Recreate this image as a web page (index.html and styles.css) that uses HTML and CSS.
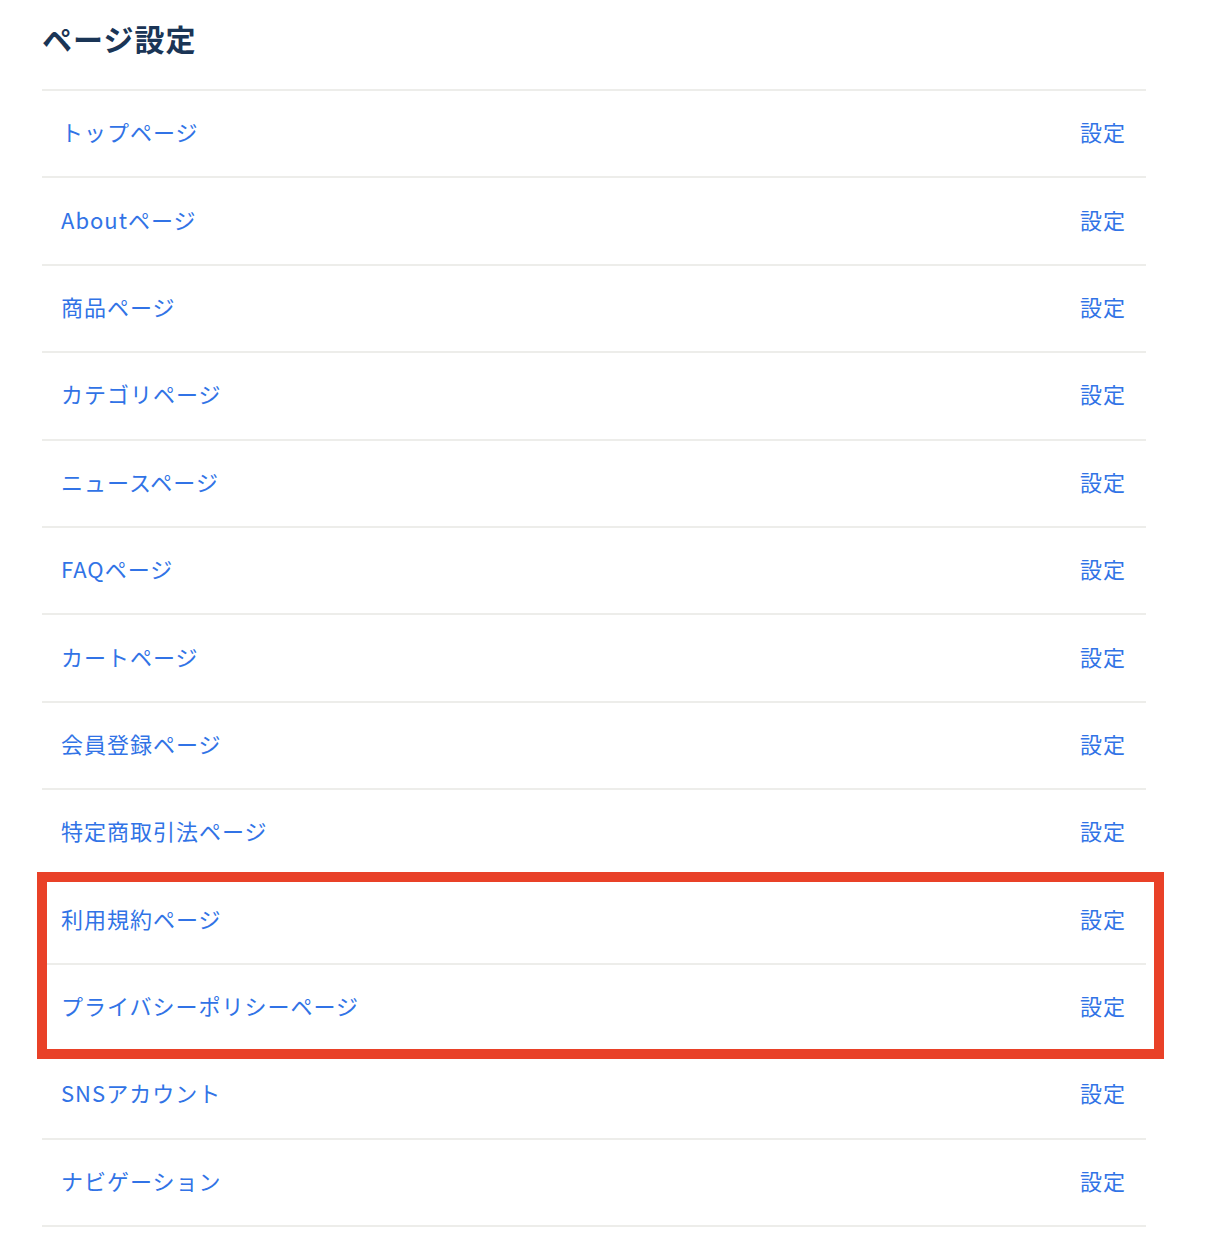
FILE: index.html
```html
<!DOCTYPE html>
<html lang="ja">
<head>
<meta charset="UTF-8">
<meta name="viewport" content="width=device-width, initial-scale=1.0">
<title>ページ設定</title>
<link rel="stylesheet" href="styles.css">
</head>
<body>
<div class="page-settings">
    <h1 class="page-title">ページ設定</h1>
    <ul class="settings-list">
        <li class="settings-row"><a class="row-label" href="#">トップページ</a><a class="row-action" href="#">設定</a></li>
        <li class="settings-row"><a class="row-label" href="#">Aboutページ</a><a class="row-action" href="#">設定</a></li>
        <li class="settings-row"><a class="row-label" href="#">商品ページ</a><a class="row-action" href="#">設定</a></li>
        <li class="settings-row"><a class="row-label" href="#">カテゴリページ</a><a class="row-action" href="#">設定</a></li>
        <li class="settings-row"><a class="row-label" href="#">ニュースページ</a><a class="row-action" href="#">設定</a></li>
        <li class="settings-row"><a class="row-label" href="#">FAQページ</a><a class="row-action" href="#">設定</a></li>
        <li class="settings-row"><a class="row-label" href="#">カートページ</a><a class="row-action" href="#">設定</a></li>
        <li class="settings-row"><a class="row-label" href="#">会員登録ページ</a><a class="row-action" href="#">設定</a></li>
        <li class="settings-row"><a class="row-label" href="#">特定商取引法ページ</a><a class="row-action" href="#">設定</a></li>
        <li class="highlight-group">
            <ul class="settings-list">
                <li class="settings-row"><a class="row-label" href="#">利用規約ページ</a><a class="row-action" href="#">設定</a></li>
                <li class="settings-row"><a class="row-label" href="#">プライバシーポリシーページ</a><a class="row-action" href="#">設定</a></li>
            </ul>
        </li>
        <li class="settings-row"><a class="row-label" href="#">SNSアカウント</a><a class="row-action" href="#">設定</a></li>
        <li class="settings-row last"><a class="row-label" href="#">ナビゲーション</a><a class="row-action" href="#">設定</a></li>
    </ul>
</div>
</body>
</html>
```

FILE: styles.css
```css
* {
    margin: 0;
    padding: 0;
    box-sizing: border-box;
    font-family: "Noto Sans CJK JP", "Noto Sans", sans-serif;
}

body {
    background-color: #fff;
}

.page-settings {
    width: 1104px;
    margin-left: 42px;
    padding-top: 17px;
}

.page-title {
    font-size: 30px;
    font-weight: bold;
    color: #1a3556;
    line-height: 42px;
    height: 72px;
    letter-spacing: 1px;
}

.settings-list {
    list-style: none;
}

.settings-row {
    display: flex;
    align-items: center;
    justify-content: space-between;
    height: 87.4px;
    border-top: 2px solid #ededea;
    padding: 0 20px 5px 19px;
}

.settings-row.last {
    border-bottom: 2px solid #ededea;
    height: 89.4px;
}

.row-label,
.row-action {
    font-size: 22px;
    color: #3173e6;
    text-decoration: none;
    line-height: 30px;
    letter-spacing: 1px;
}

.highlight-group {
    position: relative;
}

/* annotation frame round the highlighted rows */
.highlight-group::after {
    content: "";
    position: absolute;
    left: -5px;
    right: -18px;
    top: -4px;
    bottom: -9px;
    border: 10px solid #e94128;
    pointer-events: none;
}
```
